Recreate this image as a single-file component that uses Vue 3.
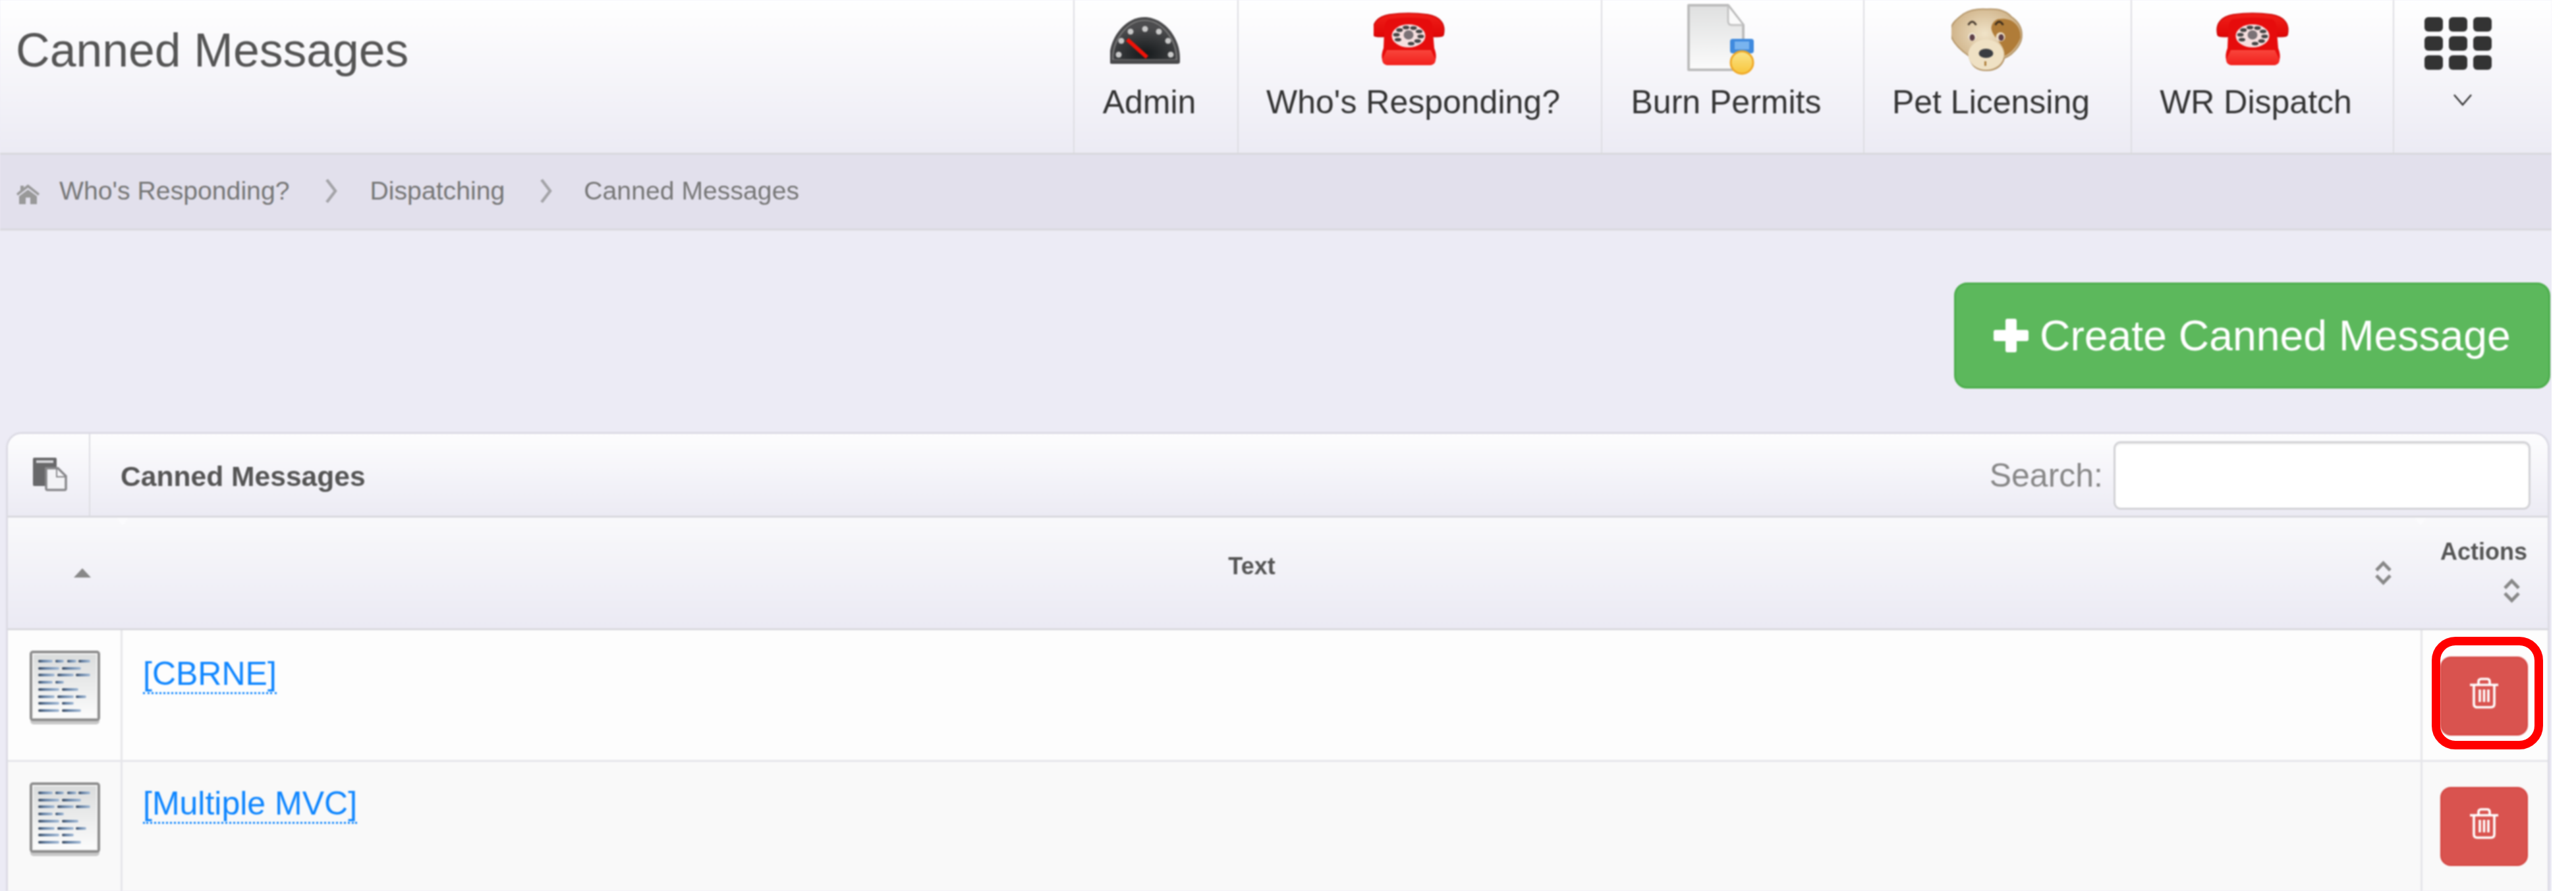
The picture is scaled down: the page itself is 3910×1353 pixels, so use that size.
<script setup>
const navItems = [
  { label: 'Admin', icon: 'gauge' },
  { label: "Who's Responding?", icon: 'phone', dx: -2 },
  { label: 'Burn Permits', icon: 'doc' },
  { label: 'Pet Licensing', icon: 'dog' },
  { label: 'WR Dispatch', icon: 'phone', dx: 0 },
]
const gaugeDots = [[14,57],[18,36],[32,22],[54,18],[75,22],[89,36],[93,57]]
const dialHoles = Array.from({ length: 9 }, (_, i) => {
  const a = (150 + i * 36) * Math.PI / 180
  return { x: 55 + 18.5 * Math.cos(a), y: 35 + 12.5 * Math.sin(a) }
})
const docLines = [
  [14, [[13,35],[39,52],[57,71],[74,92]]],
  [25, [[13,45],[49,78]]],
  [35, [[13,38],[42,67],[70,92]]],
  [46, [[13,35],[39,52]]],
  [57, [[13,45],[49,74]]],
  [68, [[13,38],[42,67],[70,86]]],
  [78, [[13,45],[49,67]]],
  [89, [[13,45],[49,78]]],
].flatMap(([y, segs]) => segs.map(([a, b]) => ({ x: a, y, w: b - a })))
const rows = ['[CBRNE]', '[Multiple MVC]']
</script>

<template>
  <div class="page">
    <div class="content">
      <header class="top">
        <h1 class="title">Canned Messages</h1>
        <nav class="nav">
          <a v-for="item in navItems" :key="item.label" class="nav-item">
            <svg v-if="item.icon === 'gauge'" class="nav-icon" width="120" height="120" viewBox="0 0 120 120">
              <defs>
                <radialGradient id="gaugeFace" cx="0.5" cy="0.85" r="0.7">
                  <stop offset="0" stop-color="#15191b" />
                  <stop offset="1" stop-color="#4c4c4e" />
                </radialGradient>
              </defs>
              <g transform="translate(-1 26)">
                <path d="M0 62C0 30 25 0 53 0C82 0 107 30 107 62L107 68Q107 71 103 71L4 71Q0 71 0 68Z" fill="#4a4a4c" />
                <path d="M5 64C5 33 28 5 53 5C79 5 102 33 102 64Z" fill="none" stroke="#777" stroke-width="2" />
                <path d="M7 64C7 33 28 7 53 7C79 7 100 33 100 64Z" fill="url(#gaugeFace)" />
                <circle v-for="d in gaugeDots" :key="d[0]" :cx="d[0]" :cy="d[1]" r="4.5" fill="#c9c9c9" />
                <line x1="27" y1="34" x2="57" y2="61" stroke="#f01208" stroke-width="6" />
              </g>
            </svg>
            <svg v-else-if="item.icon === 'phone'" class="nav-icon" width="120" height="120" viewBox="0 0 120 120">
              <defs>
                <linearGradient id="phoneTop" x1="0" y1="0" x2="0" y2="1">
                  <stop offset="0" stop-color="#f0201a" />
                  <stop offset="1" stop-color="#e00606" />
                </linearGradient>
                <linearGradient id="phoneBase" x1="0" y1="0" x2="0" y2="1">
                  <stop offset="0" stop-color="#f8453c" />
                  <stop offset="1" stop-color="#f2201c" />
                </linearGradient>
              </defs>
              <g :transform="`translate(${item.dx} 19)`">
                <path d="M2 34C-2 16 8 6 26 3Q55 -1 84 3C102 6 112 16 108 34C107 38 90 37 86 35L85 22L25 22L24 35C20 37 3 38 2 34Z" fill="url(#phoneTop)" stroke="#c80404" stroke-width="1.5" />
                <path d="M26 10Q55 6 84 10Q92 12 92 30L94 54Q98 64 96 72Q95 80 86 80L25 80Q16 80 15 72Q13 64 17 54L18 30Q18 12 26 10Z" fill="#e60c0c" />
                <path d="M22 57L89 57L96 72Q95 80 86 80L25 80Q16 80 15 72Z" fill="url(#phoneBase)" />
                <ellipse cx="55" cy="35.5" rx="25.5" ry="17.5" fill="#f6dfdf" />
                <ellipse v-for="(h, i) in dialHoles" :key="i" :cx="h.x" :cy="h.y" rx="5" ry="2.8" fill="#454545" />
                <ellipse cx="55" cy="34" rx="7.5" ry="7" fill="#7b7276" />
              </g>
            </svg>
            <svg v-else-if="item.icon === 'doc'" class="nav-icon" width="120" height="120" viewBox="0 0 120 120">
              <defs>
                <linearGradient id="docFill" x1="0" y1="0" x2="0" y2="1">
                  <stop offset="0" stop-color="#dfe0e0" />
                  <stop offset="1" stop-color="#fbfbfb" />
                </linearGradient>
                <linearGradient id="coin" x1="0" y1="0" x2="0" y2="1">
                  <stop offset="0" stop-color="#fbe58a" />
                  <stop offset="1" stop-color="#f8c53c" />
                </linearGradient>
              </defs>
              <g transform="translate(1 6)">
                <path d="M2 2L62 2L85 32L85 100L2 100Z" fill="url(#docFill)" stroke="#bcbcbc" stroke-width="4" stroke-linejoin="round" />
                <path d="M62 4L62 26Q62 32 68 32L84 32" fill="#fafafa" stroke="#c4c4c4" stroke-width="3" />
                <rect x="65" y="53" width="36" height="22" rx="4" fill="#3f8ade" />
                <rect x="72" y="57" width="22" height="12" fill="#79b4ef" />
                <ellipse cx="83" cy="89" rx="17" ry="17" fill="url(#coin)" stroke="#efa928" stroke-width="3" />
              </g>
            </svg>
            <svg v-else-if="item.icon === 'dog'" class="nav-icon" width="120" height="120" viewBox="0 0 120 120">
              <defs>
                <radialGradient id="dogHead" cx="0.48" cy="0.4" r="0.65">
                  <stop offset="0" stop-color="#f0e3c8" />
                  <stop offset="1" stop-color="#c4a273" />
                </radialGradient>
              </defs>
              <g transform="translate(-1.5 13)">
                <path d="M55 1C75 0 85 4 92 12C104 20 110 30 108 45C106 58 92 72 82 75C78 88 68 94 55 94C40 94 32 88 28 72C14 62 0 48 0 35C0 22 12 14 20 8C30 2 42 0 55 1Z" fill="url(#dogHead)" stroke="#b59669" stroke-width="2" />
                <path d="M72 16C95 12 108 28 106 45C100 60 90 68 82 72C84 55 64 45 62 30C62 24 66 18 72 16Z" fill="#b07c38" />
                <ellipse cx="54" cy="70" rx="27" ry="23" fill="#efe1c4" />
                <path d="M27 25Q33 15 39 25" fill="none" stroke="#4d4033" stroke-width="3" />
                <path d="M68 25Q74 15 80 25" fill="none" stroke="#3d2e1d" stroke-width="3" />
                <ellipse cx="33" cy="43" rx="6" ry="6" fill="#f4ecdf" />
                <ellipse cx="33" cy="44" rx="4" ry="5" fill="#5c3e46" />
                <ellipse cx="76" cy="43" rx="7" ry="7" fill="#ecdcc4" />
                <ellipse cx="77" cy="44" rx="4" ry="5" fill="#5c3e46" />
                <ellipse cx="54" cy="68" rx="11" ry="7" fill="#3a3d42" />
                <line x1="53" y1="80" x2="53" y2="87" stroke="#b0813f" stroke-width="3" />
              </g>
            </svg>
            <span class="nav-label">{{ item.label }}</span>
          </a>
          <a class="nav-item nav-more">
            <span class="apps"><i v-for="n in 9" :key="n"></i></span>
            <svg class="caret" width="28" height="18" viewBox="0 0 28 18"><path d="M1 1L14 16L27 1" fill="none" stroke="#333" stroke-width="2.5" /></svg>
          </a>
        </nav>
      </header>

      <div class="crumbs">
        <svg class="home" width="35" height="30" viewBox="0 0 35 30">
          <path d="M17.5 0L35 14L33 17L17.5 5L2 17L0 14L6 9V2H11V5Z" fill="#999" />
          <path d="M17.5 8L31 18V30H21V20H14V30H4V18Z" fill="#999" />
        </svg>
        <span class="crumb">Who's Responding?</span>
        <svg class="sep" width="18" height="36" viewBox="0 0 18 36"><path d="M2 1L15 18L2 35" fill="none" stroke="#a4a4a8" stroke-width="4.5" /></svg>
        <span class="crumb">Dispatching</span>
        <svg class="sep sep-2" width="18" height="36" viewBox="0 0 18 36"><path d="M2 1L15 18L2 35" fill="none" stroke="#a4a4a8" stroke-width="4.5" /></svg>
        <span class="crumb">Canned Messages</span>
      </div>

      <div class="action-bar">
        <button class="create" type="button">
          <svg width="53" height="51" viewBox="0 0 53 51"><path d="M18 3Q18 0 21 0H32Q35 0 35 3V17H50Q53 17 53 20V31Q53 34 50 34H35V48Q35 51 32 51H21Q18 51 18 48V34H3Q0 34 0 31V20Q0 17 3 17H18Z" fill="#fff" /></svg>
          <span>Create Canned Message</span>
        </button>
      </div>

      <section class="panel">
        <div class="toolbar">
          <div class="toolbar-icon">
            <svg width="53" height="51" viewBox="0 0 53 51">
              <rect x="0" y="0" width="36" height="43" rx="2" fill="#68686a" />
              <rect x="5" y="4" width="26" height="4" fill="#d6d6da" />
              <path d="M20 16H38L50 28V47Q50 49 48 49H22Q20 49 20 47Z" fill="#f3f3f6" stroke="#88888b" stroke-width="3.5" />
              <path d="M36 17V29H49" fill="none" stroke="#88888b" stroke-width="2" />
            </svg>
          </div>
          <span class="toolbar-title">Canned Messages</span>
          <label class="search">
            <span>Search:</span>
            <input type="text" />
          </label>
        </div>

        <div class="thead">
          <div class="th th-first"><span class="asc"></span></div>
          <div class="th th-text">
            <span class="th-label">Text</span>
            <svg class="sort" width="27" height="38" viewBox="0 0 27 38"><path d="M3 15L13.5 4L24 15M3 23L13.5 34L24 23" fill="none" stroke="#888" stroke-width="5" /></svg>
          </div>
          <div class="th th-actions">
            <span class="actions-label">Actions</span>
            <svg class="sort sort-actions" width="27" height="38" viewBox="0 0 27 38"><path d="M3 15L13.5 4L24 15M3 23L13.5 34L24 23" fill="none" stroke="#888" stroke-width="5" /></svg>
          </div>
        </div>

        <div v-for="(text, i) in rows" :key="text" class="row" :class="{ 'row-alt': i === 1 }">
          <div class="cell cell-icon">
            <svg width="109" height="114" viewBox="0 0 109 114">
              <defs>
                <linearGradient id="pageFill" x1="0" y1="0" x2="0" y2="1">
                  <stop offset="0" stop-color="#d9dbdb" />
                  <stop offset="1" stop-color="#fdfdfd" />
                </linearGradient>
                <linearGradient id="lineFill" x1="0" y1="0" x2="1" y2="0">
                  <stop offset="0" stop-color="#36465c" />
                  <stop offset="0.35" stop-color="#6480a3" />
                  <stop offset="1" stop-color="#a4bcd8" />
                </linearGradient>
              </defs>
              <rect x="1" y="6" width="105" height="106" rx="5" fill="#c8c8c8" />
              <rect x="2" y="2" width="103" height="103" rx="3" fill="url(#pageFill)" stroke="#8e8e8e" stroke-width="4" />
              <rect x="5" y="5" width="97" height="97" fill="none" stroke="#f4f4f4" stroke-width="2" />
              <rect v-for="(l, k) in docLines" :key="k" :x="l.x" :y="l.y" :width="l.w" height="4" rx="2" fill="url(#lineFill)" />
            </svg>
          </div>
          <div class="cell cell-text"><a class="msg-link">{{ text }}</a></div>
          <div class="cell cell-act">
            <button class="del" type="button" aria-label="Delete">
              <svg width="43" height="47" viewBox="0 0 43 47">
                <path d="M0 11H43M13 10V6Q13 2 17 2H26Q30 2 30 6V10M6 11V40Q6 45 11 45H32Q37 45 37 40V11M15 18V37M21.5 18V37M28 18V37" fill="none" stroke="#fff" stroke-width="3.6" />
              </svg>
            </button>
          </div>
        </div>
      </section>
    </div>
    <span class="mark"></span>
  </div>
</template>

<style scoped>
.page {
  position: relative;
  width: 3873px;
  height: 1353px;
  overflow: hidden;
  background: #ecebf5;
  font-family: "Liberation Sans", Arial, sans-serif;
}
.content {
  height: 1353px;
  overflow: hidden;
  filter: blur(0.8px);
}
.top {
  box-sizing: border-box;
  height: 235px;
  display: flex;
  justify-content: space-between;
  background: linear-gradient(#ffffff, #ecebf4);
  border-bottom: 3px solid #d9d9dd;
}
.title {
  margin: 36px 0 0 24px;
  font-size: 71.5px;
  line-height: 80px;
  font-weight: 400;
  color: #555;
}
.nav {
  display: grid;
  grid-template-columns: 249px 552px 398px 406px 398px 241px;
}
.nav-item {
  box-sizing: border-box;
  border-left: 2px solid #dddde2;
  padding-right: 20px;
  display: flex;
  flex-direction: column;
  align-items: center;
}
.nav-icon { display: block; margin-bottom: 5px; }
.nav-label { font-size: 50px; line-height: 60px; color: #333; white-space: nowrap; }
.nav-more { padding-right: 46px; }
.apps {
  margin-top: 26px;
  width: 102px;
  display: grid;
  grid-template-columns: repeat(3, 28px);
  grid-auto-rows: 22px;
  column-gap: 9px;
  row-gap: 7px;
}
.apps i { background: #333; border-radius: 6px; }
.caret { margin-top: 37px; margin-left: 14px; }

.crumbs {
  box-sizing: border-box;
  height: 115px;
  padding: 36px 0 0 25px;
  display: flex;
  align-items: flex-start;
  background: #e2e0ec;
  border-bottom: 3px solid #d9d9de;
}
.home { margin-top: 9px; margin-right: 30px; }
.crumb { font-size: 39.2px; line-height: 44px; color: #777; margin-top: -3px; }
.sep { margin: 1px 50px 0 54px; }
.sep-2 { margin-right: 48px; }

.action-bar {
  display: flex;
  justify-content: flex-end;
  padding: 79px 2px 66px 0;
}
.create {
  box-sizing: border-box;
  width: 905px;
  height: 161px;
  padding: 0 0 0 57px;
  display: flex;
  align-items: center;
  gap: 17px;
  font: 64.3px "Liberation Sans", Arial, sans-serif;
  color: #fff;
  background: #5cb85c;
  border: 3px solid #4cae4c;
  border-radius: 20px;
}

.panel {
  margin: 0 3px 0 9px;
  border: 3px solid #dcdbe4;
  border-bottom: 0;
  border-radius: 24px 24px 0 0;
  overflow: hidden;
}
.toolbar {
  box-sizing: border-box;
  height: 127px;
  display: flex;
  align-items: stretch;
  background: linear-gradient(#fdfdfe, #ecebf4);
  border-bottom: 3px solid #d9d9de;
}
.toolbar-icon {
  box-sizing: border-box;
  width: 125px;
  padding: 36px 0 0 38px;
  border-right: 2px solid #dddde2;
}
.toolbar-title {
  margin: 40px 0 0 46px;
  font-size: 42.6px;
  line-height: 48px;
  font-weight: 700;
  color: #555;
}
.search {
  margin-left: auto;
  padding: 11px 26px 0 0;
  display: flex;
  gap: 16px;
}
.search span { font-size: 50px; line-height: 60px; margin-top: 22px; color: #888; }
.search input {
  box-sizing: border-box;
  width: 633px;
  height: 104px;
  background: #fff;
  border: 3px solid #d2d2d6;
  border-radius: 11px;
  box-shadow: inset 0 2px 2px rgba(0, 0, 0, .07);
  outline: none;
}

.thead {
  box-sizing: border-box;
  height: 171px;
  display: grid;
  grid-template-columns: 174px 1fr 193px;
  background: linear-gradient(#f9f9fb, #ebeaf4);
  border-bottom: 3px solid #d9d9de;
}
.th {
  position: relative;
  font-size: 36px;
  line-height: 40px;
  font-weight: 700;
  color: #555;
}
.th-first, .th-text { display: flex; align-items: center; }
.th-first { padding-left: 100px; box-sizing: border-box; }
.th-first::after, .th-text::after {
  content: "";
  position: absolute;
  top: 0;
  right: -9px;
  border-left: 9px solid transparent;
  border-right: 9px solid transparent;
  border-top: 12px solid #fbfbfd;
}
.asc {
  width: 0;
  height: 0;
  border-left: 13px solid transparent;
  border-right: 13px solid transparent;
  border-bottom: 14px solid #888;
}
.th-label { flex: 1; text-align: center; margin-right: -10px; padding-bottom: 20px; }
.sort { display: block; flex: none; }
.th-text .sort { margin-right: 43px; }
.th-actions { display: flex; flex-direction: column; align-items: flex-start; padding: 32px 0 0 30px; }
.sort-actions { margin: 20px 0 0 95px; }

.row {
  box-sizing: border-box;
  height: 200px;
  display: grid;
  grid-template-columns: 174px 1fr 193px;
  background: #fdfdfd;
  border-bottom: 3px solid #e6e6ea;
}
.row-alt { background: #f9f9f9; height: 260px; }
.cell-icon {
  box-sizing: border-box;
  padding: 31px 0 0 33px;
  border-right: 3px solid #e6e6ea;
}
.cell-icon svg { display: block; }
.cell-text { padding: 38px 0 0 31px; font-size: 50px; line-height: 56px; }
.row-alt .cell-text { padding-top: 35px; }
.msg-link { color: #0f86ff; border-bottom: 3px dotted #0f86ff; }
.cell-act {
  box-sizing: border-box;
  padding: 40px 0 0 27px;
  border-left: 3px solid #e6e6ea;
}
.row-alt .cell-act { padding-top: 38px; }
.del {
  box-sizing: border-box;
  width: 133px;
  height: 120px;
  padding: 0 0 9px;
  display: flex;
  align-items: center;
  justify-content: center;
  background: #d9534f;
  border: 2px solid #d4433f;
  border-radius: 16px;
}
.mark {
  position: absolute;
  left: 3691px;
  top: 967px;
  width: 169px;
  height: 171px;
  box-sizing: border-box;
  border: 13px solid #ff0000;
  border-radius: 36px;
  pointer-events: none;
}
</style>

<style>
html, body { background: #fff; margin: 0; }
</style>
